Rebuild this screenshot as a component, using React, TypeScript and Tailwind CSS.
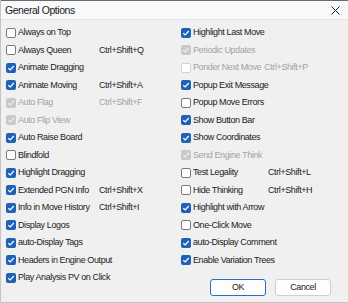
import React from "react";

type Opt = {
  label: string;
  state: "on" | "off" | "dis-on" | "dis-off";
  keys?: string;
};

const leftOpts: Opt[] = [
  { label: "Always on Top", state: "off" },
  { label: "Always Queen", state: "off", keys: "Ctrl+Shift+Q" },
  { label: "Animate Dragging", state: "on" },
  { label: "Animate Moving", state: "on", keys: "Ctrl+Shift+A" },
  { label: "Auto Flag", state: "dis-on", keys: "Ctrl+Shift+F" },
  { label: "Auto Flip View", state: "dis-on" },
  { label: "Auto Raise Board", state: "on" },
  { label: "Blindfold", state: "off" },
  { label: "Highlight Dragging", state: "on" },
  { label: "Extended PGN Info", state: "on", keys: "Ctrl+Shift+X" },
  { label: "Info in Move History", state: "on", keys: "Ctrl+Shift+I" },
  { label: "Display Logos", state: "on" },
  { label: "auto-Display Tags", state: "on" },
  { label: "Headers in Engine Output", state: "on" },
  { label: "Play Analysis PV on Click", state: "on" },
];

const rightOpts: Opt[] = [
  { label: "Highlight Last Move", state: "on" },
  { label: "Periodic Updates", state: "dis-on" },
  { label: "Ponder Next Move", state: "dis-off", keys: "Ctrl+Shift+P" },
  { label: "Popup Exit Message", state: "on" },
  { label: "Popup Move Errors", state: "off" },
  { label: "Show Button Bar", state: "on" },
  { label: "Show Coordinates", state: "on" },
  { label: "Send Engine Think", state: "dis-on" },
  { label: "Test Legality", state: "off", keys: "Ctrl+Shift+L" },
  { label: "Hide Thinking", state: "off", keys: "Ctrl+Shift+H" },
  { label: "Highlight with Arrow", state: "on" },
  { label: "One-Click Move", state: "off" },
  { label: "auto-Display Comment", state: "on" },
  { label: "Enable Variation Trees", state: "on" },
];

const Box = ({ state }: { state: Opt["state"] }) => {
  if (state === "on" || state === "dis-on") {
    return (
      <span
        className={`w-[10px] h-[10px] rounded-[2px] flex items-center justify-center shrink-0 ${
          state === "on" ? "bg-[#1f62b5]" : "bg-[#c9c9c9]"
        }`}
      >
        <svg width="8" height="8" viewBox="0 0 8 8" fill="none">
          <path d="M1.3 4.2 L3.2 6 L6.8 2" stroke={state === "on" ? "#fff" : "#ececec"} strokeWidth="1.2" />
        </svg>
      </span>
    );
  }
  return (
    <span
      className={`w-[10px] h-[10px] rounded-[2px] bg-white border shrink-0 ${
        state === "off" ? "border-[#7a7a7a]" : "border-[#d2d2d2]"
      }`}
    />
  );
};

const Row = ({ opt, labelW }: { opt: Opt; labelW: string }) => {
  const dis = opt.state.startsWith("dis");
  return (
    <div className={`h-[17.5px] flex items-center ${dis ? "text-[#a3a3a3]" : "text-[#1b1b1b]"}`}>
      <Box state={opt.state} />
      <span className={`ml-[2px] whitespace-nowrap ${labelW}`}>{opt.label}</span>
      {opt.keys && <span className="whitespace-nowrap">{opt.keys}</span>}
    </div>
  );
};

export default function App() {
  return (
    <div
      className="w-[348px] h-[303px] bg-[#f0f0f0] border-l border-b border-[#c4c4c4] overflow-hidden text-[9px] tracking-[-0.4px] leading-none"
      style={{ fontFamily: '"Liberation Sans", Arial, sans-serif' }}
    >
      <div className="h-[20px] bg-[#f8f9fb] border-t border-[#6b6b6b] border-b border-b-[#e6e6e6] flex items-center justify-between pl-[4px] pr-[8px]">
        <span className="text-[10.5px] tracking-[-0.45px] text-[#1a1a1a]">General Options</span>
        <svg width="9" height="9" viewBox="0 0 9 9">
          <path d="M0.5 0.5 L8.5 8.5 M8.5 0.5 L0.5 8.5" stroke="#222" strokeWidth="1" />
        </svg>
      </div>
      <div className="flex pt-[4px]">
        <div className="w-[180px] pl-[5px]">
          {leftOpts.map((o) => (
            <Row key={o.label} opt={o} labelW="w-[81px]" />
          ))}
        </div>
        <div className="flex-1">
          {rightOpts.map((o) => (
            <Row
              key={o.label}
              opt={o}
              labelW={o.label === "Ponder Next Move" ? "mr-[3px]" : "w-[75px]"}
            />
          ))}
          <div className="flex gap-[9px] ml-[29px] mt-[10px]">
            <button className="w-[56px] h-[17px] bg-[#fdfdfd] border border-[#2a6cc0] rounded-[3px] text-[9px] text-[#1b1b1b]">
              OK
            </button>
            <button className="w-[56px] h-[17px] bg-[#fdfdfd] border border-[#cfcfcf] rounded-[3px] text-[9px] text-[#1b1b1b]">
              Cancel
            </button>
          </div>
        </div>
      </div>
    </div>
  );
}
